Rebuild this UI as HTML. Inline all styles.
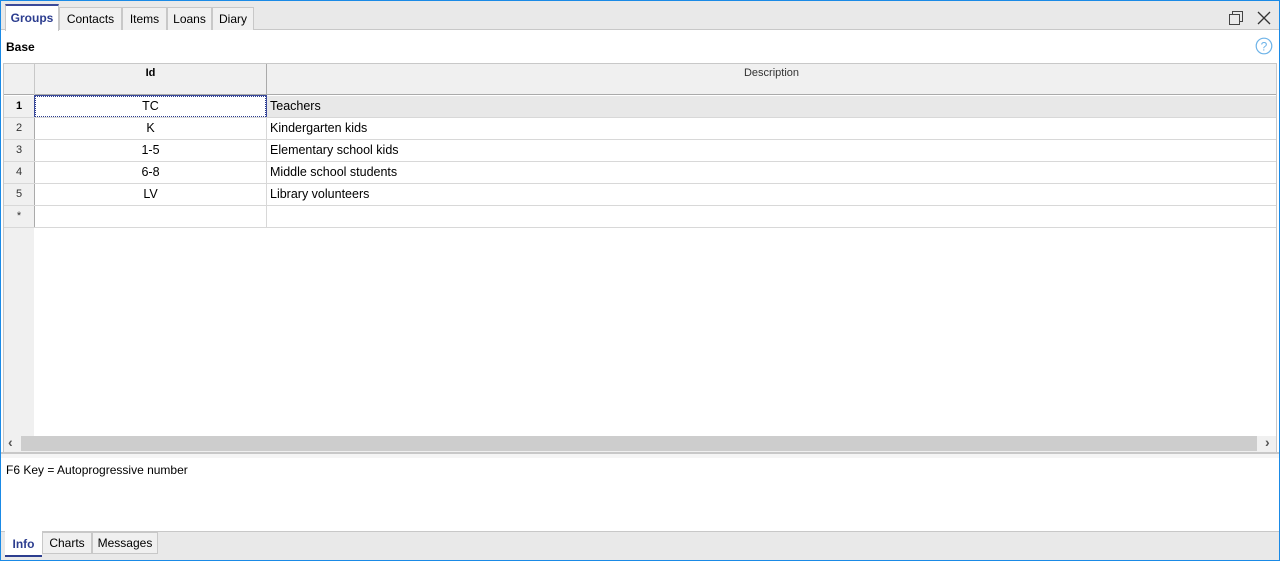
<!DOCTYPE html>
<html><head><style>
*{margin:0;padding:0;box-sizing:border-box}
body{width:1280px;height:561px;position:relative;overflow:hidden;background:#fff;font-family:"Liberation Sans",sans-serif;font-size:12px;color:#000}
.a{position:absolute}
.tab{position:absolute;top:7px;height:23px;border:1px solid #c8c8c8;border-bottom:none;background:#f0f0f0;text-align:center;line-height:22px;font-size:12px}
.btab{position:absolute;top:532px;height:22px;border:1px solid #c8c8c8;background:#f0f0f0;text-align:center;line-height:20px;font-size:12px}
.hl{position:absolute;left:4px;width:1272px;height:1px;background:#d8d8d8}
.rn{position:absolute;left:4px;width:30px;text-align:center;font-size:11px;color:#333}
.id{position:absolute;left:35px;width:231px;text-align:center;font-size:12.5px}
.ds{position:absolute;left:270px;font-size:12.5px}
</style></head><body>
<div class="a" style="left:0;top:0;width:1280px;height:561px;border:1px solid #1a8ae6;z-index:10;pointer-events:none"></div>
<div class="a" style="left:0;top:0;width:1280px;height:30px;background:#e9e9e9;border-bottom:1px solid #c8c8c8"></div>
<div class="tab" style="left:5px;top:4px;width:54px;height:27px;background:#fff;border-top:2px solid #3b4a9a;color:#2c3d8f;line-height:25px;font-weight:bold">Groups</div>
<div class="tab" style="left:59px;width:63px">Contacts</div>
<div class="tab" style="left:122px;width:45px">Items</div>
<div class="tab" style="left:167px;width:45px">Loans</div>
<div class="tab" style="left:212px;width:42px">Diary</div>
<svg class="a" style="left:1228px;top:10px" width="16" height="16"><rect x="1.5" y="4.5" width="10" height="10" fill="none" stroke="#444"/><path d="M4.5 4.5V1.5H14.5V11.5H11.5" fill="none" stroke="#444"/></svg>
<svg class="a" style="left:1257px;top:11px" width="14" height="14"><path d="M1 1L13 13M13 1L1 13" stroke="#333" stroke-width="1.3"/></svg>
<div class="a" style="left:6px;top:40px;font-weight:bold;font-size:12px">Base</div>
<svg class="a" style="left:1255px;top:37px" width="18" height="18"><circle cx="9" cy="9" r="7.8" fill="none" stroke="#6db3e8" stroke-width="1.2"/><text x="9" y="13.5" text-anchor="middle" font-family="Liberation Sans" font-size="12" fill="#6db3e8">?</text></svg>
<div class="a" style="left:3px;top:63px;width:1274px;height:390px;border:1px solid #c8c8c8;border-bottom:none"></div>
<div class="a" style="left:4px;top:64px;width:1272px;height:31px;background:#f0f0f0;border-bottom:1px solid #aaa"></div>
<div class="a" style="left:34px;top:64px;width:1px;height:31px;background:#c8c8c8"></div>
<div class="a" style="left:266px;top:64px;width:1px;height:31px;background:#aaa"></div>
<div class="a" style="left:35px;top:67px;width:231px;text-align:center;font-weight:bold;font-size:11px">Id</div>
<div class="a" style="left:267px;top:67px;width:1009px;text-align:center;font-size:11px;color:#333">Description</div>
<div class="a" style="left:4px;top:96px;width:30px;height:340px;background:#f0f0f0"></div>
<div class="a" style="left:34px;top:96px;width:1px;height:132px;background:#aaa"></div>
<div class="a" style="left:266px;top:96px;width:1px;height:132px;background:#d8d8d8"></div>
<div class="a" style="left:267px;top:96px;width:1009px;height:21px;background:#e8e8e8"></div>
<div class="a" style="left:35px;top:96px;width:231px;height:21px;border:1px dotted #2c3d8f;outline:1px solid #3b4a9a"></div>
<div class="hl" style="top:117px"></div><div class="hl" style="top:139px"></div><div class="hl" style="top:161px"></div><div class="hl" style="top:183px"></div><div class="hl" style="top:205px"></div><div class="hl" style="top:227px"></div>
<div class="rn" style="top:100px;font-weight:bold;color:#000">1</div><div class="id" style="top:99px">TC</div><div class="ds" style="top:99px">Teachers</div>
<div class="rn" style="top:122px">2</div><div class="id" style="top:121px">K</div><div class="ds" style="top:121px">Kindergarten kids</div>
<div class="rn" style="top:144px">3</div><div class="id" style="top:143px">1-5</div><div class="ds" style="top:143px">Elementary school kids</div>
<div class="rn" style="top:166px">4</div><div class="id" style="top:165px">6-8</div><div class="ds" style="top:165px">Middle school students</div>
<div class="rn" style="top:188px">5</div><div class="id" style="top:187px">LV</div><div class="ds" style="top:187px">Library volunteers</div>
<div class="rn" style="top:210px">*</div>
<div class="a" style="left:4px;top:436px;width:1272px;height:16px;background:#f0f0f0"></div>
<div class="a" style="left:21px;top:436px;width:1236px;height:15px;background:#cdcdcd"></div>
<div class="a" style="left:8px;top:434px;font-size:14px;color:#555;font-weight:bold">‹</div>
<div class="a" style="left:1265px;top:434px;font-size:14px;color:#555;font-weight:bold">›</div>
<div class="a" style="left:0;top:452px;width:1280px;height:2px;background:#c8c8c8"></div>
<div class="a" style="left:0;top:454px;width:1280px;height:4px;background:#f5f5f5"></div>
<div class="a" style="left:6px;top:463px;font-size:12px">F6 Key = Autoprogressive number</div>
<div class="a" style="left:0;top:531px;width:1280px;height:30px;background:#e9e9e9;border-top:1px solid #c8c8c8"></div>
<div class="btab" style="left:5px;top:531px;width:37px;height:26px;background:#fff;border:none;border-bottom:2px solid #2c3d8f;color:#2c3d8f;font-weight:bold;line-height:26px">Info</div>
<div class="btab" style="left:42px;width:50px">Charts</div>
<div class="btab" style="left:92px;width:66px">Messages</div>
</body></html>
